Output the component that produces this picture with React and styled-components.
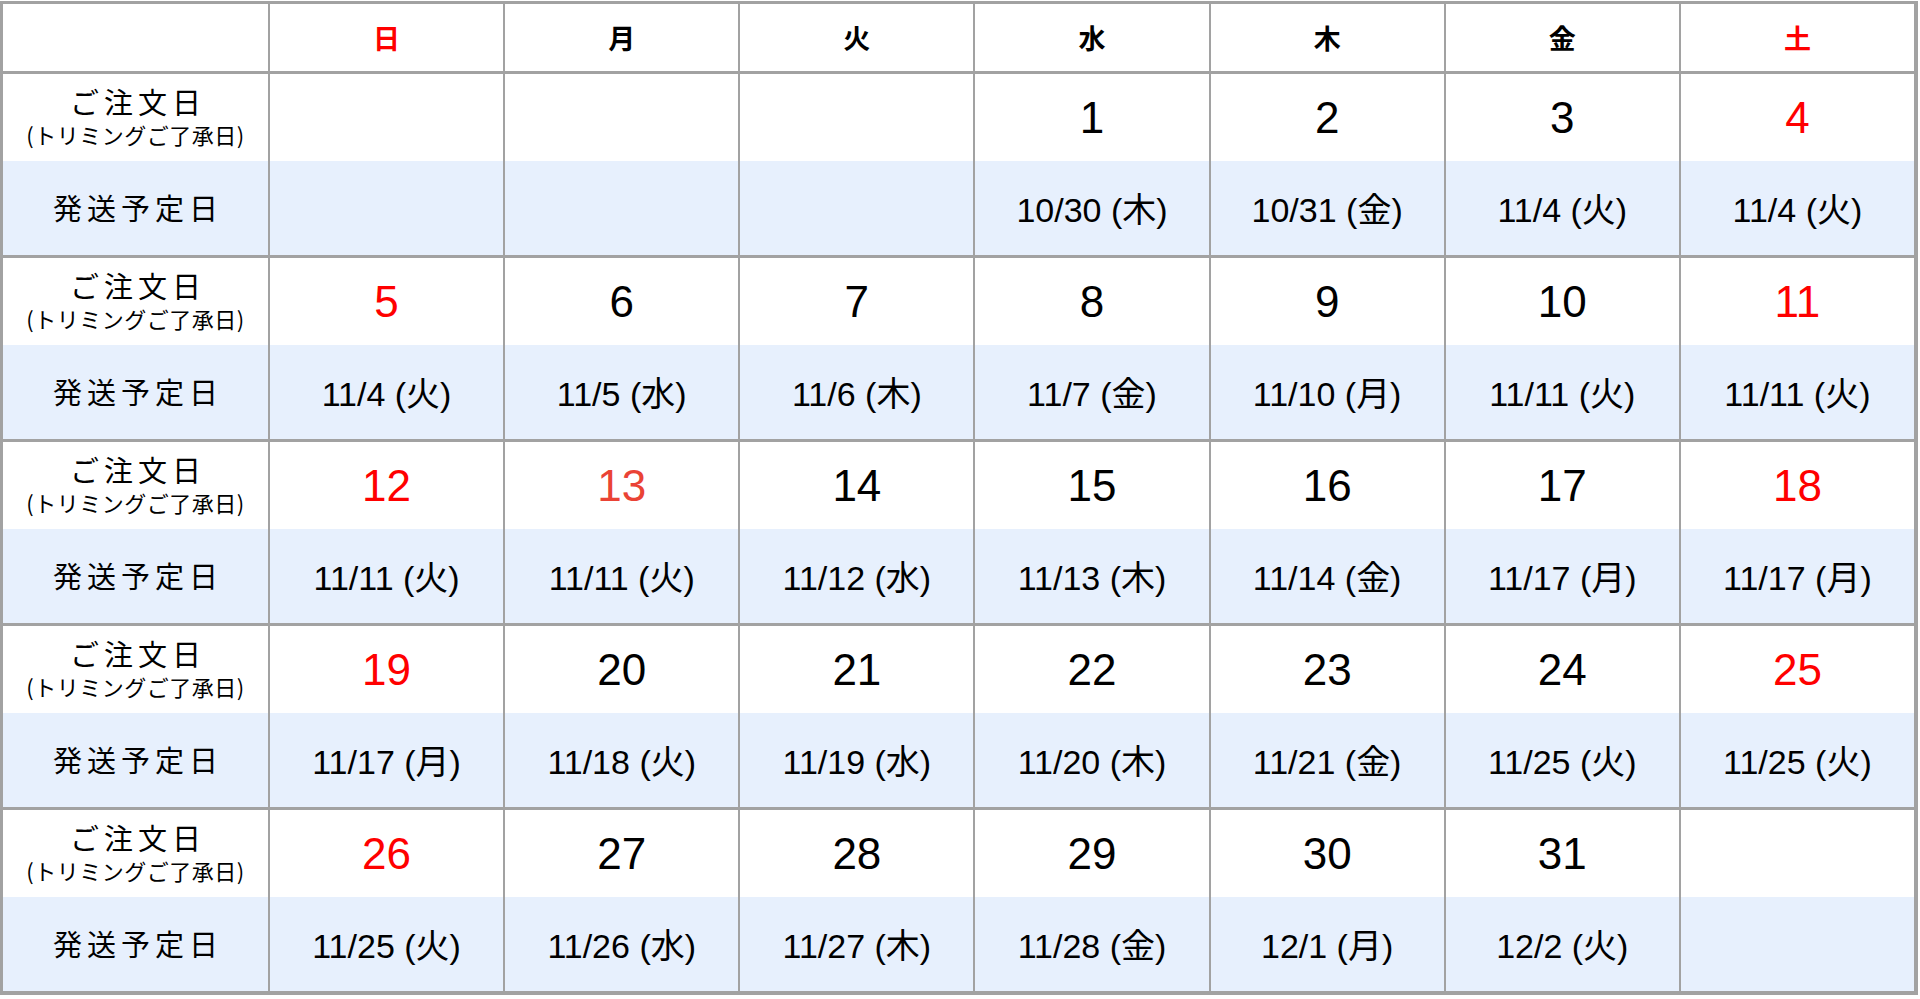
import React from 'react';
import styled, { createGlobalStyle } from 'styled-components';

const GlobalStyle = createGlobalStyle`
  html, body {
    margin: 0;
    padding: 0;
    background: #ffffff;
  }
  body {
    font-family: "Liberation Sans", "Noto Sans CJK JP", sans-serif;
    color: #000000;
  }
`;

const DAYS = [
  { name: '日', holiday: true },
  { name: '月' },
  { name: '火' },
  { name: '水' },
  { name: '木' },
  { name: '金' },
  { name: '土', holiday: true },
];

// red = weekend, soft = public holiday
const WEEKS = [
  {
    dates: [null, null, null, { d: 1 }, { d: 2 }, { d: 3 }, { d: 4, red: true }],
    ship: ['', '', '', '10/30 (木)', '10/31 (金)', '11/4 (火)', '11/4 (火)'],
  },
  {
    dates: [{ d: 5, red: true }, { d: 6 }, { d: 7 }, { d: 8 }, { d: 9 }, { d: 10 }, { d: 11, red: true }],
    ship: ['11/4 (火)', '11/5 (水)', '11/6 (木)', '11/7 (金)', '11/10 (月)', '11/11 (火)', '11/11 (火)'],
  },
  {
    dates: [{ d: 12, red: true }, { d: 13, soft: true }, { d: 14 }, { d: 15 }, { d: 16 }, { d: 17 }, { d: 18, red: true }],
    ship: ['11/11 (火)', '11/11 (火)', '11/12 (水)', '11/13 (木)', '11/14 (金)', '11/17 (月)', '11/17 (月)'],
  },
  {
    dates: [{ d: 19, red: true }, { d: 20 }, { d: 21 }, { d: 22 }, { d: 23 }, { d: 24 }, { d: 25, red: true }],
    ship: ['11/17 (月)', '11/18 (火)', '11/19 (水)', '11/20 (木)', '11/21 (金)', '11/25 (火)', '11/25 (火)'],
  },
  {
    dates: [{ d: 26, red: true }, { d: 27 }, { d: 28 }, { d: 29 }, { d: 30 }, { d: 31 }, null],
    ship: ['11/25 (火)', '11/26 (水)', '11/27 (木)', '11/28 (金)', '12/1 (月)', '12/2 (火)', ''],
  },
];

const App = () => {
  return (
    <>
      <GlobalStyle />
      <Board>
        <HeaderRow>
          <HeadCell />
          {DAYS.map(day => (
            <HeadCell key={day.name} $red={day.holiday}>{day.name}</HeadCell>
          ))}
        </HeaderRow>
        {WEEKS.map((week, i) => (
          <Week key={i}>
            <OrderRow>
              <LabelCell>
                <LabelMain>ご注文日</LabelMain>
                <LabelSub>(トリミングご了承日)</LabelSub>
              </LabelCell>
              {week.dates.map((date, j) => (
                <DateCell key={j} $red={date && date.red} $soft={date && date.soft}>
                  {date ? date.d : ''}
                </DateCell>
              ))}
            </OrderRow>
            <ShipRow>
              <ShipLabel>発送予定日</ShipLabel>
              {week.ship.map((s, j) => (
                <ShipCell key={j}>{s}</ShipCell>
              ))}
            </ShipRow>
          </Week>
        ))}
      </Board>
    </>
  );
};

const Board = styled.div`
  box-sizing: border-box;
  width: 1918px;
  margin-top: 1px;
  display: flex;
  flex-direction: column;
  gap: 3px;
  background: #a2a2a2;
  border-style: solid;
  border-color: #a2a2a2;
  border-width: 3px 4px 4px 3px;
`;

const Row = styled.div`
  display: grid;
  grid-template-columns: 265px repeat(7, 1fr);
  column-gap: 2px;
  background: #a2a2a2;
`;

const HeaderRow = styled(Row)`
  height: 67px;
`;

const Week = styled.div`
  display: flex;
  flex-direction: column;
`;

const OrderRow = styled(Row)`
  height: 87px;
`;

const ShipRow = styled(Row)`
  height: 94px;
`;

const Cell = styled.div`
  display: flex;
  align-items: center;
  justify-content: center;
  background: #ffffff;
`;

const HeadCell = styled(Cell)`
  font-family: "Noto Sans CJK JP", sans-serif;
  font-weight: 700;
  font-size: 27px;
  color: ${p => (p.$red ? '#ff0000' : '#000000')};
`;

const LabelCell = styled(Cell)`
  flex-direction: column;
  gap: 4px;
  padding-bottom: 3px;
  font-family: "Noto Sans CJK JP", sans-serif;
`;

const LabelMain = styled.div`
  font-size: 29px;
  line-height: 32px;
  letter-spacing: 5px;
  padding-left: 5px;
`;

const LabelSub = styled.div`
  font-size: 22px;
  line-height: 26px;
  letter-spacing: 0.5px;
  white-space: nowrap;
`;

const DateCell = styled(Cell)`
  font-size: 44px;
  color: ${p => (p.$soft ? '#ea4335' : p.$red ? '#ff0000' : '#000000')};
`;

const ShipCell = styled(Cell)`
  background: #e7f0fd;
  font-size: 34px;
  padding-bottom: 2px;
`;

const ShipLabel = styled(ShipCell)`
  font-family: "Noto Sans CJK JP", sans-serif;
  font-size: 29px;
  letter-spacing: 5px;
  padding-left: 5px;
`;

export default App;
